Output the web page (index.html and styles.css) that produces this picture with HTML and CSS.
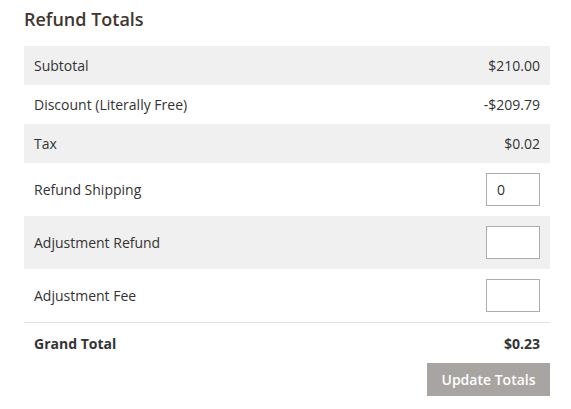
FILE: index.html
```html
<!DOCTYPE html>
<html>
<head>
<meta charset="utf-8">
<link rel="stylesheet" href="styles.css">
</head>
<body>
<section class="totals">
  <h2 class="title">Refund Totals</h2>
  <table class="grid">
    <tr class="row shade"><td class="label">Subtotal</td><td class="amount">$210.00</td></tr>
    <tr class="row"><td class="label">Discount (Literally Free)</td><td class="amount">-$209.79</td></tr>
    <tr class="row shade"><td class="label">Tax</td><td class="amount">$0.02</td></tr>
    <tr class="row field"><td class="label">Refund Shipping</td><td class="amount"><input class="box" type="text" value="0"></td></tr>
    <tr class="row field shade"><td class="label">Adjustment Refund</td><td class="amount"><input class="box" type="text" value=""></td></tr>
    <tr class="row field"><td class="label">Adjustment Fee</td><td class="amount"><input class="box" type="text" value=""></td></tr>
    <tr class="row grand"><td class="label">Grand Total</td><td class="amount">$0.23</td></tr>
  </table>
  <div class="actions"><button class="update" type="button">Update Totals</button></div>
</section>
</body>
</html>
```

FILE: styles.css
```css
html, body {
  margin: 0;
  padding: 0;
  background: #fff;
}
body {
  font-family: "Open Sans", "Liberation Sans", sans-serif;
  font-size: 14px;
  color: #333;
}
.totals {
  width: 526px;
  padding: 0 21px 0 24px;
}
.title {
  margin: 0;
  padding-top: 7px;
  height: 46px;
  box-sizing: border-box;
  font-size: 18px;
  font-weight: 600;
  line-height: 24px;
  color: #41362f;
}
.grid {
  width: 100%;
  border-collapse: collapse;
}
.row td {
  height: 39px;
  padding: 0 10px;
  line-height: 19px;
  vertical-align: middle;
}
.row.field td {
  height: 53px;
}
.shade td {
  background: #f0f0f0;
}
.amount {
  text-align: right;
}
.box {
  display: block;
  margin-left: auto;
  width: 54px;
  height: 33px;
  box-sizing: border-box;
  border: 1px solid #adadad;
  padding: 0 10px;
  font-family: "Open Sans", "Liberation Sans", sans-serif;
  font-size: 14px;
  color: #303030;
  background: #fff;
  border-radius: 0;
  outline: none;
}
.grand td {
  border-top: 1px solid #e3e3e3;
  font-weight: 700;
  height: 39px;
  padding-top: 1px;
}
.actions {
  display: flex;
  justify-content: flex-end;
}
.update {
  height: 33px;
  width: 123px;
  border: none;
  background: #a8a4a1;
  color: #fff;
  font-family: "Open Sans", "Liberation Sans", sans-serif;
  font-size: 14px;
  font-weight: 600;
  padding: 0;
}
```
